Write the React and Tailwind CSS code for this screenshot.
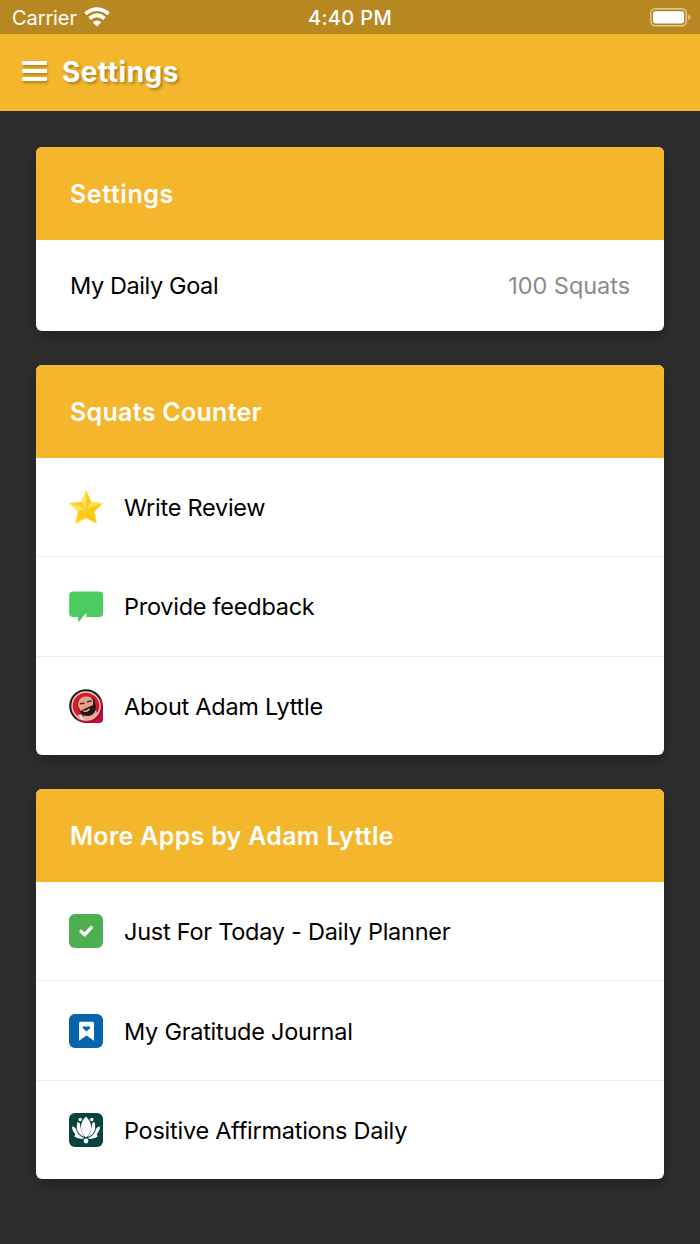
const StarIcon = () => (
    <svg viewBox="0 0 34 34" className="w-[34px] h-[34px] shrink-0">
        <defs>
            <linearGradient id="star" x1="0" y1="0" x2="1" y2="1">
                <stop offset="0" stopColor="#ffe04a" />
                <stop offset="1" stopColor="#fcc400" />
            </linearGradient>
        </defs>
        <path d="M17.200 1.500 22 12.300 33 13.600 25 21.400 27.300 33 17.200 27.500 7 33 9.400 21.400 1 13.600 12.400 12.300Z" fill="url(#star)" stroke="#ffdc3c" strokeWidth="1.200" strokeLinejoin="round" />
        <path d="M17.200 1.500 22 12.300 17.200 19Z M33 13.600 25 21.400 17.200 19Z M27.300 33 17.200 27.500V19Z M7 33 9.400 21.400 17.200 19Z M1 13.600 12.400 12.300 17.200 19Z" fill="#f8bd00" opacity="0.4" />
        <path d="M17.200 1.500 12.400 12.300 17.200 19Z M33 13.600 22 12.300 17.200 19Z M1 13.600 9.400 21.400 17.200 19Z" fill="#fff08a" opacity="0.5" />
    </svg>
);

const FeedbackIcon = () => (
    <svg viewBox="0 0 34 34" className="w-[34px] h-[34px] shrink-0">
        <path d="M4 1.500H30.500Q34.200 1.500 34.200 5V23.500Q34.200 27 30.500 27H16.500Q12.500 29.500 9.200 32V27H4Q.2 27 .2 23.500V5Q.2 1.500 4 1.500Z" fill="#4ccb5f" />
        <path d="M18 22.800Q13.500 26.300 10.500 31.500L13 31 17 27Z" fill="#fff" />
    </svg>
);

const AvatarIcon = () => (
    <svg viewBox="0 0 34 34" className="w-[34px] h-[34px] shrink-0">
        <path d="M17 17H34V30Q34 34 30 34H17Z" fill="#c00d35" />
        <circle cx="17" cy="17" r="16.800" fill="#231c1d" />
        <path d="M31.500 9A16.800 16.800 0 0 1 17 33.800Q12 34 7 30.500L13 24Z" fill="#c00d35" />
        <circle cx="17" cy="17" r="14" fill="#dd1824" stroke="#e6d2d0" strokeWidth="1.400" />
        <path d="M14 31 15 25 26 20 28.500 24.500Q24 31 17 31Z" fill="#f0a890" />
        <path d="M8.500 17Q8 9 15 7.500Q23 6 25.500 11L27 18Q27 25 20 27Q14 27.500 11 23Z" fill="#231818" />
        <path d="M9 17Q8.500 9 15 7.500Q22.500 6.500 24 11.500L24 16 18.500 18.500 11.500 22Z" fill="#e3a08b" />
        <path d="M11 14.800 15.500 14.300M18 13 22.500 11.800" stroke="#512923" strokeWidth="1.400" />
        <path d="M14.500 22.300Q18 22.800 20.500 20" stroke="#eebfae" strokeWidth="1.400" fill="none" />
        <path d="M8.500 26 12 25.500 15.500 30.500 12 30Z" fill="#f4eeee" />
    </svg>
);

const PlannerIcon = () => (
    <svg viewBox="0 0 34 34" className="w-[34px] h-[34px] shrink-0">
        <rect width="34" height="34" rx="6" fill="#4caf50" />
        <path d="M12.200 17.500 15.700 20.600 22.200 13.600" stroke="#fff" strokeWidth="3.600" strokeLinecap="round" fill="none" />
    </svg>
);

const JournalIcon = () => (
    <svg viewBox="0 0 34 34" className="w-[34px] h-[34px] shrink-0">
        <rect width="34" height="34" rx="6" fill="#0764ad" />
        <path d="M11.500 7.800H23.500Q25 7.800 25 9.300V26.800L17.500 21.500 10 26.800V9.300Q10 7.800 11.500 7.800Z" fill="#fff" />
        <path d="M17.500 17.500 14 14.300Q13.200 12.500 15 12.300 16.700 12.200 17.500 12.800 18.300 12.200 20 12.300 21.800 12.500 21 14.300Z" fill="#0764ad" />
    </svg>
);

const LotusIcon = () => (
    <svg viewBox="0 0 34 34" className="w-[34px] h-[34px] shrink-0">
        <rect width="34" height="34" rx="6" fill="#07443f" />
        <g fill="#fff">
            <path d="M17 3.500Q22.500 8.500 22 15 21.500 21 17 24.500 12.500 21 12 15 11.500 8.500 17 3.500Z" />
            <path d="M8.500 9Q10.500 9 11 11 11.500 18 15.500 24 9.500 22 7.800 16 7.500 12 8.500 9Z" />
            <path d="M25.500 9Q23.500 9 23 11 22.500 18 18.500 24 24.500 22 26.200 16 26.500 12 25.500 9Z" />
            <path d="M3 13.500Q6.500 13.500 7.200 17 9 22.500 15.500 25.200 9.500 27 5 23.300 7.500 22 5 19.500 3 17 3 13.500Z" />
            <path d="M31 13.500Q27.500 13.500 26.800 17 25 22.500 18.500 25.200 24.500 27 29 23.300 26.500 22 29 19.500 31 17 31 13.500Z" />
            <circle cx="11.200" cy="6.500" r="1.700" />
            <circle cx="22.800" cy="6.500" r="1.700" />
            <circle cx="17" cy="28" r="2.400" />
        </g>
    </svg>
);

const WifiIcon = () => (
    <svg viewBox="0 0 26 20" className="w-[26px] h-5">
        <g fill="none" stroke="#fff" strokeWidth="3.800">
            <path d="M1.500 6.700Q13-2.500 24.500 6.700" />
            <path d="M5.500 11.500Q13 5 20.500 11.500" />
        </g>
        <path d="M8.700 15.200Q13 11.600 17.300 15.200L13 19.400Z" fill="#fff" />
    </svg>
);

const BatteryIcon = () => (
    <svg viewBox="0 0 42 20" className="w-[42px] h-5">
        <rect x="1.800" y="1.800" width="35.500" height="17" rx="4.500" fill="none" stroke="#dfc79b" strokeWidth="1.500" />
        <rect x="4" y="4.300" width="31" height="12.200" rx="2.400" fill="#fff" />
        <path d="M39.300 7.300Q41.400 8.300 41.400 10.300T39.300 13.300Z" fill="#dfc79b" />
    </svg>
);

const counterLinks = [
    { label: 'Write Review', Icon: StarIcon },
    { label: 'Provide feedback', Icon: FeedbackIcon },
    { label: 'About Adam Lyttle', Icon: AvatarIcon },
];

const appLinks = [
    { label: 'Just For Today - Daily Planner', Icon: PlannerIcon },
    { label: 'My Gratitude Journal', Icon: JournalIcon },
    { label: 'Positive Affirmations Daily', Icon: LotusIcon },
];

function Card({ title, titleClass = 'tracking-[0.3px]', children }) {
    return (
        <section className="bg-white rounded-[6px] overflow-hidden shadow-[0_6px_16px_rgba(0,0,0,0.3)]">
            <h2 className={`h-[92.6px] px-[34px] pt-[2px] flex items-center bg-[#f4b62c] text-white text-[25px] font-semibold ${titleClass}`}>{title}</h2>
            {children}
        </section>
    );
}

function LinkList({ items }) {
    return (
        <ul className="divide-y divide-[#ececec]">
            {items.map(({ label, Icon }) => (
                <li key={label} className="h-[99.7px] last:h-[98.2px] pl-[33px] flex items-center gap-[21px] text-[23.5px] tracking-[-0.26px]">
                    <Icon />
                    <span className="pt-px">{label}</span>
                </li>
            ))}
        </ul>
    );
}

export default function App() {
    return (
        <div className="w-full h-[1244px] overflow-hidden bg-[#2e2e2e] text-black font-['Inter','Liberation_Sans',sans-serif]">
            {/* Status bar */}
            <div className="h-[34px] bg-[#b78822] text-white grid grid-cols-3 items-center pl-3 pr-[9px]">
                <div className="flex items-center gap-[7px] text-[20px] tracking-[-0.1px]">
                    <span className="pt-[2px]">Carrier</span>
                    <WifiIcon />
                </div>
                <div className="text-center text-[20px] font-medium tracking-[0.35px] pt-[2px] -ml-[3px]">4:40 PM</div>
                <div className="flex justify-end"><BatteryIcon /></div>
            </div>

            {/* Title bar */}
            <header className="h-[77.400px] bg-[#f4b62c] flex items-center pl-[22px] pb-[3px] gap-[15px]">
                <button className="flex flex-col gap-1" aria-label="Menu">
                    <span className="w-[25px] h-1 rounded-[1px] bg-white shadow-[1px_2px_3px_rgba(0,0,0,0.3)]" />
                    <span className="w-[25px] h-1 rounded-[1px] bg-white shadow-[1px_2px_3px_rgba(0,0,0,0.3)]" />
                    <span className="w-[25px] h-1 rounded-[1px] bg-white shadow-[1px_2px_3px_rgba(0,0,0,0.3)]" />
                </button>
                <h1 className="text-[28px] font-bold text-white tracking-[0.5px] pt-px [text-shadow:2px_2px_3px_rgba(0,0,0,0.3)]">Settings</h1>
            </header>

            <main className="px-9 pt-9 flex flex-col gap-[34px]">
                <Card title="Settings" titleClass="tracking-[0.6px]">
                    <div className="h-[91px] px-[34px] flex items-center justify-between text-[23.5px]">
                        <span className="tracking-[-0.4px] pt-px">My Daily Goal</span>
                        <span className="text-[#8b8b8d] tracking-[-0.05px] pt-px">100 Squats</span>
                    </div>
                </Card>
                <Card title="Squats Counter">
                    <LinkList items={counterLinks} />
                </Card>
                <Card title="More Apps by Adam Lyttle">
                    <LinkList items={appLinks} />
                </Card>
            </main>
        </div>
    );
}
